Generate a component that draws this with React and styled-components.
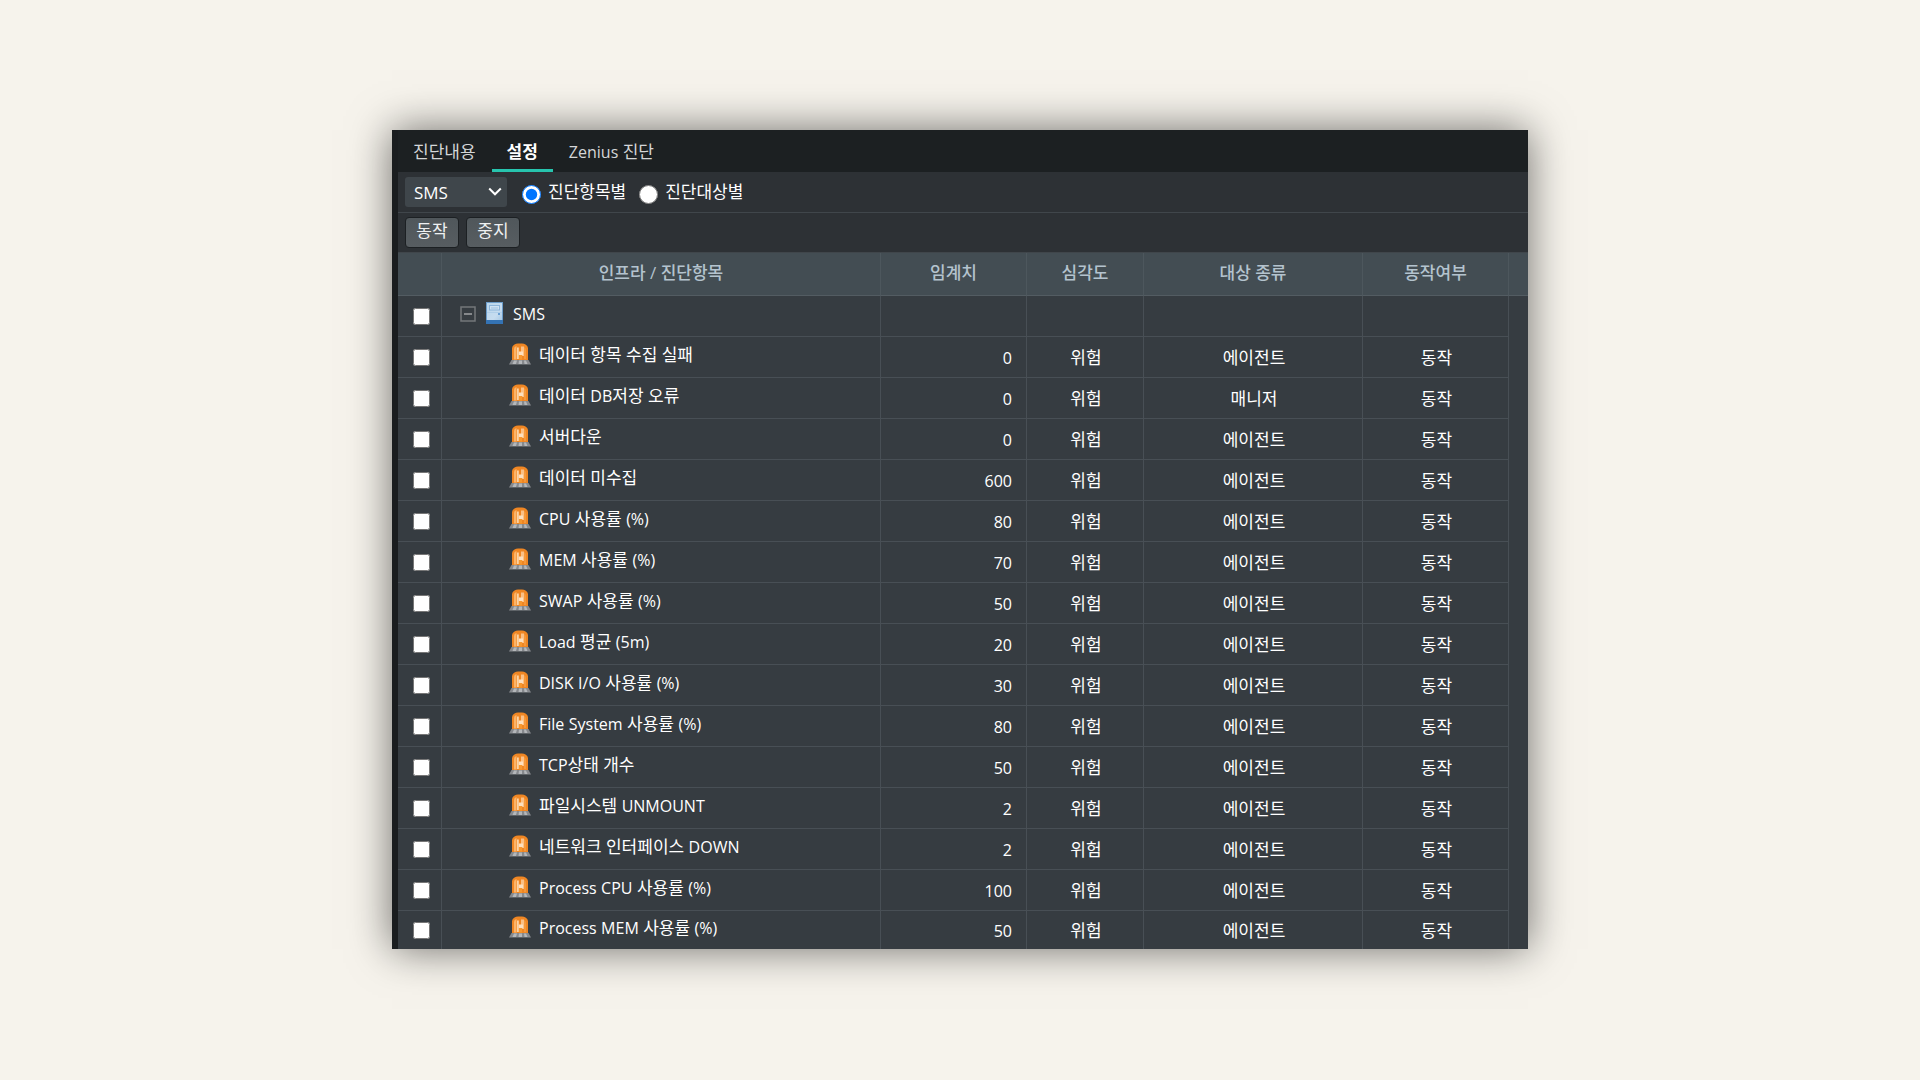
import React, { useState } from "react";
import styled, { createGlobalStyle } from "styled-components";

const GlobalStyle = createGlobalStyle`
  * {
    box-sizing: border-box;
  }
  body {
    margin: 0;
    background: #f6f3ec;
    font-family: "Open Sans", "Noto Sans CJK KR", sans-serif;
    font-size: 17px;
    color: #fff;
  }
  button, select, input {
    font-family: inherit;
    font-size: inherit;
  }
`;

const Page = styled.main`
  padding: 130px 392px;
`;

const Panel = styled.section`
  border-left: 6px solid #1a1d1f;
  background: #363c41;
  box-shadow: 0 0 40px rgba(0, 0, 0, 0.56);
`;

const Tabs = styled.nav`
  display: flex;
  gap: 1px;
  height: 42px;
  background: #1c2022;
`;

const Tab = styled.button`
  height: 42px;
  padding: 5px 15px 0;
  border: 0;
  border-bottom: 3px solid ${(props) => (props.$active ? "#27c4ae" : "transparent")};
  background: none;
  color: ${(props) => (props.$active ? "#fff" : "#d4d6d8")};
  font-weight: ${(props) => (props.$active ? 700 : 400)};
  line-height: 24px;
  white-space: nowrap;
`;

const Bar = styled.div`
  display: flex;
  align-items: center;
  height: ${(props) => props.$height}px;
  padding: 0 7px;
  gap: ${(props) => props.$gap}px;
  border-bottom: 1px solid #40464b;
  background: #2d3135;
`;

const SelectBox = styled.div`
  display: grid;
  align-items: center;
  width: 102px;
  margin-right: 2px;

  > * {
    grid-area: 1 / 1;
  }
  svg {
    justify-self: end;
    margin-right: 5px;
    pointer-events: none;
  }
`;

const Select = styled.select`
  appearance: none;
  height: 30px;
  padding: 0 9px;
  border: 0;
  border-radius: 3px;
  background: #3f464b;
  color: #fff;
`;

const RadioLabel = styled.label`
  display: flex;
  align-items: center;
  gap: 7px;
  line-height: 24px;
  white-space: nowrap;

  input {
    width: 19px;
    height: 19px;
    margin: 4px 0 0;
  }
`;

const ActionButton = styled.button`
  width: 54px;
  height: 31px;
  padding: 0 0 3px;
  border: 1px solid #1c2023;
  border-radius: 4px;
  background: linear-gradient(#50575b, #575d61);
  color: #eef0f1;
  line-height: 24px;
`;

const Table = styled.table`
  width: 100%;
  table-layout: fixed;
  border-collapse: separate;
  border-spacing: 0;
`;

const Th = styled.th`
  height: 43px;
  padding: 0 0 3px;
  border-right: 1px solid #4d575d;
  border-bottom: 1px solid #535c62;
  background: #434d53;
  color: #b4c3ce;
  font-weight: 500;
  line-height: 24px;

  &:last-child {
    border-right: 0;
  }
`;

const Td = styled.td`
  height: 41px;
  padding: ${(props) => props.$padding || "2px 0 0 2px"};
  border-right: 1px solid #484f55;
  border-bottom: 1px solid #484f55;
  text-align: ${(props) => props.$align || "center"};
  line-height: 24px;

  &:last-child {
    border: 0;
  }
  tr:last-child > & {
    height: 38px;
    border-bottom: 0;
  }
`;

const Check = styled.input`
  display: block;
  width: 17px;
  height: 17px;
  margin: 0 auto;
`;

const NameCell = styled.div`
  display: flex;
  align-items: flex-start;
  gap: ${(props) => props.$gap}px;
  white-space: nowrap;
`;

const Toggle = styled.button`
  display: block;
  align-self: center;
  padding: 0;
  border: 0;
  background: none;
  line-height: 0;
`;

const LatinText = styled.span`
  font-size: 16px;
`;

// Latin runs sit one size below the Hangul around them
function Mixed({ children }) {
  return String(children)
    .split(/([\x21-\x7e]+)/)
    .map((part, i) => (i % 2 ? <LatinText key={i}>{part}</LatinText> : part));
}

const ChevronIcon = () => (
  <svg width="14" height="10" viewBox="0 0 14 10" fill="none">
    <path d="M1.2 1.5L7 7.300L12.800 1.500" stroke="#fff" strokeWidth="2" />
  </svg>
);

const MinusIcon = () => (
  <svg width="16" height="16" viewBox="0 0 16 16" fill="none">
    <rect x="1" y="1" width="14" height="14" stroke="#74777a" strokeWidth="1.5" />
    <path d="M4 8H12" stroke="#85888b" strokeWidth="2" />
  </svg>
);

const ServerIcon = () => (
  <svg width="17" height="22" viewBox="0 0 17 22">
    <defs>
      <linearGradient id="server" x1="0" y1="0" x2="1" y2="1">
        <stop offset="0" stopColor="#b9d6ec" />
        <stop offset="0.6" stopColor="#c6dcef" />
        <stop offset="1" stopColor="#9fc3e2" />
      </linearGradient>
    </defs>
    <rect x="0.5" y="0.5" width="16" height="21" fill="url(#server)" stroke="#6c9cc9" />
    <rect x="3.5" y="3.500" width="10" height="4.500" fill="#cfe2f2" stroke="#8db5da" />
    <path d="M5 6H12" stroke="#9dc1e1" />
    <path d="M1 10.500H16" stroke="#b0cfe9" />
    <rect x="12" y="11" width="2" height="2" fill="#6a9fd2" />
    <rect x="0" y="18" width="17" height="4" fill="#3473b4" />
  </svg>
);

const AlarmIcon = () => (
  <svg width="22" height="22" viewBox="0 0 22 22">
    <path d="M3 17.500V5Q3.200 2.500 5.500 1.500Q7 0.500 9 0.500H13Q15 0.500 16.500 1.500Q18.800 2.500 19 5V17.500Z" fill="#ef8623" />
    <path d="M5 16.500V6Q5 3.500 7.500 3V16.500Z" fill="#fbb469" />
    <path d="M8 4.500H9.800V16H8Z" fill="#fcd3a4" />
    <path d="M12 3.500H15V13H12Z" fill="#fbc187" />
    <path d="M9.800 8.500H14V12H9.800Z" fill="#fde0bf" />
    <path d="M10 12H13V16.500H10Z" fill="#f6982f" />
    <path d="M15 4Q17 5 17 7V16H15Z" fill="#f5993b" />
    <path d="M2.500 17H19.500L22 21.500H0Z" fill="#86898d" />
    <path d="M5 17.500H8L7 21H3.500ZM10 17.500H13V21H9.500ZM15 17.500H17L18.500 21H15.500Z" fill="#b4b7ba" />
  </svg>
);

const tabs = ["진단내용", "설정", "Zenius 진단"];

const items = [
  { name: "데이터 항목 수집 실패", limit: 0, target: "에이전트" },
  { name: "데이터 DB저장 오류", limit: 0, target: "매니저" },
  { name: "서버다운", limit: 0, target: "에이전트" },
  { name: "데이터 미수집", limit: 600, target: "에이전트" },
  { name: "CPU 사용률 (%)", limit: 80, target: "에이전트" },
  { name: "MEM 사용률 (%)", limit: 70, target: "에이전트" },
  { name: "SWAP 사용률 (%)", limit: 50, target: "에이전트" },
  { name: "Load 평균 (5m)", limit: 20, target: "에이전트" },
  { name: "DISK I/O 사용률 (%)", limit: 30, target: "에이전트" },
  { name: "File System 사용률 (%)", limit: 80, target: "에이전트" },
  { name: "TCP상태 개수", limit: 50, target: "에이전트" },
  { name: "파일시스템 UNMOUNT", limit: 2, target: "에이전트" },
  { name: "네트워크 인터페이스 DOWN", limit: 2, target: "에이전트" },
  { name: "Process CPU 사용률 (%)", limit: 100, target: "에이전트" },
  { name: "Process MEM 사용률 (%)", limit: 50, target: "에이전트" },
];

function App() {
  const [tab, setTab] = useState("설정");
  const [view, setView] = useState("item");
  const [open, setOpen] = useState(true);

  return (
    <Page>
      <GlobalStyle />
      <Panel>
        <Tabs>
          {tabs.map((name) => (
            <Tab key={name} $active={name === tab} onClick={() => setTab(name)}>
              <Mixed>{name}</Mixed>
            </Tab>
          ))}
        </Tabs>
        <Bar $height={41} $gap={13}>
          <SelectBox>
            <Select aria-label="인프라">
              <option>SMS</option>
            </Select>
            <ChevronIcon />
          </SelectBox>
          <RadioLabel>
            <input
              type="radio"
              name="view"
              checked={view === "item"}
              onChange={() => setView("item")}
            />
            진단항목별
          </RadioLabel>
          <RadioLabel>
            <input
              type="radio"
              name="view"
              checked={view === "target"}
              onChange={() => setView("target")}
            />
            진단대상별
          </RadioLabel>
        </Bar>
        <Bar $height={40} $gap={7}>
          <ActionButton>동작</ActionButton>
          <ActionButton>중지</ActionButton>
        </Bar>
        <Table>
          <colgroup>
            <col width="44" />
            <col />
            <col width="146" />
            <col width="117" />
            <col width="219" />
            <col width="146" />
            <col width="19" />
          </colgroup>
          <thead>
            <tr>
              <Th />
              <Th>인프라 / 진단항목</Th>
              <Th>임계치</Th>
              <Th>심각도</Th>
              <Th>대상 종류</Th>
              <Th>동작여부</Th>
              <Th />
            </tr>
          </thead>
          <tbody>
            <tr>
              <Td $padding="0 0 0 4px">
                <Check type="checkbox" aria-label="SMS" />
              </Td>
              <Td $align="left" $padding="0 0 4px 18px">
                <NameCell $gap={10}>
                  <Toggle aria-label="SMS 접기" onClick={() => setOpen(!open)}>
                    <MinusIcon />
                  </Toggle>
                  <ServerIcon />
                  <Mixed>SMS</Mixed>
                </NameCell>
              </Td>
              <Td />
              <Td />
              <Td />
              <Td />
              <Td />
            </tr>
            {open &&
              items.map((item) => (
                <tr key={item.name}>
                  <Td $padding="0 0 0 4px">
                    <Check type="checkbox" aria-label={item.name} />
                  </Td>
                  <Td $align="left" $padding="0 0 4px 67px">
                    <NameCell $gap={8}>
                      <AlarmIcon />
                      <span>
                        <Mixed>{item.name}</Mixed>
                      </span>
                    </NameCell>
                  </Td>
                  <Td $align="right" $padding="2px 14px 0 0">
                    <Mixed>{item.limit}</Mixed>
                  </Td>
                  <Td>위험</Td>
                  <Td>{item.target}</Td>
                  <Td>동작</Td>
                  <Td />
                </tr>
              ))}
          </tbody>
        </Table>
      </Panel>
    </Page>
  );
}

export default App;
